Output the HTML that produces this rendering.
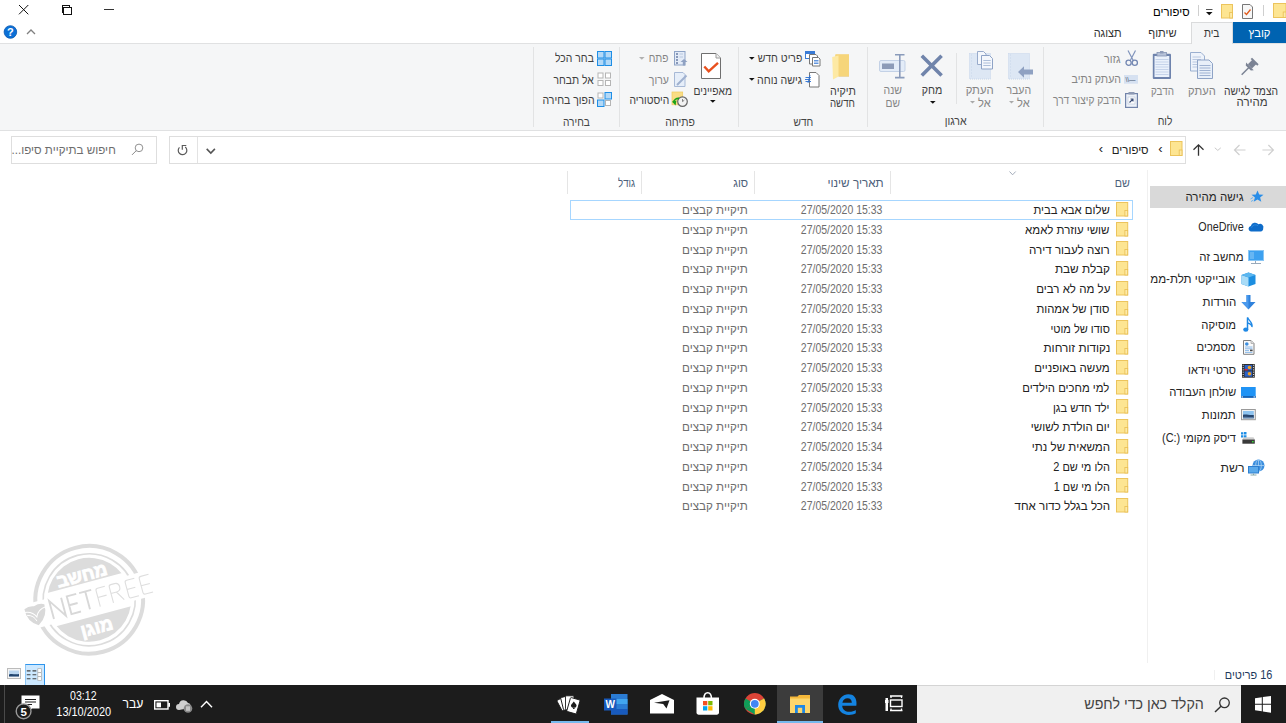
<!DOCTYPE html>
<html><head><meta charset="utf-8">
<style>
*{margin:0;padding:0;box-sizing:border-box}
html,body{width:1286px;height:723px;overflow:hidden;background:#fff}
body{position:relative;font-family:"Liberation Sans",sans-serif;font-size:12px;color:#000}
.a{position:absolute}
.t{position:absolute;white-space:nowrap;font-size:12px;line-height:14px}
.r{direction:rtl;text-align:right}
.l{direction:ltr;text-align:left}
svg{position:absolute;overflow:visible}
</style></head><body>
<svg style="left:0;top:0" width="140" height="22">
 <path d="M19 5 L28.3 14.3 M28.3 5 L19 14.3" stroke="#111" stroke-width="1" fill="none"/>
 <rect x="63.5" y="7.5" width="8" height="6.5" stroke="#111" stroke-width="1" fill="none" shape-rendering="crispEdges"/>
 <path d="M62.5 12.5 V5.5 H69.5 V7" stroke="#111" stroke-width="1" fill="none" shape-rendering="crispEdges"/>
 <path d="M104 9.5 H114" stroke="#333" stroke-width="1" fill="none" shape-rendering="crispEdges"/>
</svg>
<div class="t" style="right:95.97px;top:4.60px;color:#000;font-size:12px;direction:rtl;font-weight:normal;transform-origin:100% 50%;transform:scaleX(0.9462)">סיפורים</div>
<div class="a" style="left:1197.5px;top:5px;width:1px;height:11px;background:#cfcfcf;"></div>
<div class="a" style="left:1263px;top:5px;width:1px;height:11px;background:#cfcfcf;"></div>
<svg style="left:1205px;top:8px" width="9" height="8"><path d="M1 1.5 H7.5" stroke="#555" stroke-width="1"/><path d="M1 4 L7.5 4 L4.25 7.2 Z" fill="#111"/></svg>
<svg style="left:1221px;top:4px" width="13" height="15.5"><rect x="0.5" y="0.5" width="11" height="13.5" fill="#fde592" stroke="#ecc45c" stroke-width="1"/><rect x="8.7" y="8.5" width="2.8" height="5.5" fill="#fdeaa8" stroke="#e9bf52" stroke-width="0.8"/></svg>
<svg style="left:1273px;top:3px" width="14.5" height="16"><rect x="0.5" y="0.5" width="12.5" height="14" fill="#fde592" stroke="#ecc45c" stroke-width="1"/><rect x="10.2" y="9" width="2.8" height="5.5" fill="#fdeaa8" stroke="#e9bf52" stroke-width="0.8"/></svg>
<svg style="left:1242px;top:4px" width="12" height="15"><path d="M0.5 0.5 H8 L10.5 3 V14.5 H0.5 Z" fill="#f7f7f7" stroke="#777" stroke-width="1"/><path d="M2.5 8.5 L4.5 10.5 L8.5 5.5" stroke="#e05a1a" stroke-width="1.3" fill="none"/></svg>
<div class="a" style="left:0px;top:43px;width:1286px;height:1px;background:#e0e1e2;"></div>
<div class="a" style="left:1233px;top:22px;width:53px;height:21px;background:#0063b1;"></div>
<div class="t" style="right:15.11px;top:26.30px;color:#fff;font-size:12px;direction:rtl;font-weight:normal;transform-origin:100% 50%;transform:scaleX(0.9348)">קובץ</div>
<div class="a" style="left:1191px;top:22px;width:42px;height:22px;background:#f5f6f7;border:1px solid #dadbdc;border-bottom:none"></div>
<div class="t" style="right:66.54px;top:26.00px;color:#333;font-size:12px;direction:rtl;font-weight:normal;transform-origin:100% 50%;transform:scaleX(0.8421)">בית</div>
<div class="t" style="right:109.73px;top:26.00px;color:#333;font-size:12px;direction:rtl;font-weight:normal;transform-origin:100% 50%;transform:scaleX(0.9258)">שיתוף</div>
<div class="t" style="right:164.21px;top:26.00px;color:#333;font-size:12px;direction:rtl;font-weight:normal;transform-origin:100% 50%;transform:scaleX(0.9133)">תצוגה</div>
<svg style="left:0;top:22px" width="40" height="22">
 <circle cx="10.4" cy="10" r="6.3" fill="#0b70d6" stroke="#0a58b0" stroke-width="0.8"/>
 <text x="10.4" y="14.2" text-anchor="middle" font-family="Liberation Sans" font-weight="bold" font-size="11" fill="#fff">?</text>
 <path d="M27 12 L31 8 L35 12" stroke="#808080" stroke-width="1.3" fill="none"/>
</svg>
<div class="a" style="left:0px;top:44px;width:1286px;height:86px;background:#f5f6f7;"></div>
<div class="a" style="left:0px;top:130px;width:1286px;height:1px;background:#e0e1e2;"></div>
<div class="a" style="left:532.5px;top:46.5px;width:1px;height:80px;background:#e2e3e4;"></div>
<div class="a" style="left:618.6px;top:46.5px;width:1px;height:80px;background:#e2e3e4;"></div>
<div class="a" style="left:738.3px;top:46.5px;width:1px;height:80px;background:#e2e3e4;"></div>
<div class="a" style="left:866.7px;top:46.5px;width:1px;height:80px;background:#e2e3e4;"></div>
<div class="a" style="left:1042.5px;top:46.5px;width:1px;height:80px;background:#e2e3e4;"></div>
<div class="a" style="left:955.7px;top:53px;width:1px;height:51px;background:#e2e3e4;"></div>
<div class="t" style="right:7.96px;top:83.70px;color:#404040;font-size:12px;direction:rtl;font-weight:normal;transform-origin:100% 50%;transform:scaleX(0.8571)">הצמד לגישה</div>
<div class="t" style="right:17.90px;top:95.00px;color:#404040;font-size:12px;direction:rtl;font-weight:normal;transform-origin:100% 50%;transform:scaleX(0.9531)">מהירה</div>
<div class="t" style="right:70.33px;top:83.70px;color:#858585;font-size:12px;direction:rtl;font-weight:normal;transform-origin:100% 50%;transform:scaleX(0.9310)">העתק</div>
<div class="t" style="right:112.56px;top:83.70px;color:#858585;font-size:12px;direction:rtl;font-weight:normal;transform-origin:100% 50%;transform:scaleX(0.8214)">הדבק</div>
<div class="t" style="right:165.46px;top:51.50px;color:#858585;font-size:12px;direction:rtl;font-weight:normal;transform-origin:100% 50%;transform:scaleX(0.8947)">גזור</div>
<div class="t" style="right:164.93px;top:72.20px;color:#858585;font-size:12px;direction:rtl;font-weight:normal;transform-origin:100% 50%;transform:scaleX(0.8839)">העתק נתיב</div>
<div class="t" style="right:165.03px;top:92.70px;color:#858585;font-size:12px;direction:rtl;font-weight:normal;transform-origin:100% 50%;transform:scaleX(0.8500)">הדבק קיצור דרך</div>
<div class="t" style="right:113.68px;top:114.00px;color:#444;font-size:12px;direction:rtl;font-weight:normal;transform-origin:100% 50%;transform:scaleX(0.8471)">לוח</div>
<svg style="left:1240px;top:55px" width="22" height="22">
 <g transform="translate(9.3 12) rotate(45) scale(0.9)">
  <rect x="-3.2" y="-8" width="6.4" height="7" fill="#7b8394"/>
  <rect x="-5.2" y="-9.5" width="10.4" height="2.2" fill="#7b8394"/>
  <path d="M-6 -1 H6 L4 1.6 H-4 Z" fill="#7b8394"/>
  <path d="M0 1 V12" stroke="#7b8394" stroke-width="1.6"/>
 </g>
</svg>
<svg style="left:1190px;top:52px" width="24" height="28">
 <path d="M0.5 0.5 H11 L14.5 4 V19 H0.5 Z" fill="#eef3fb" stroke="#9bb0d0"/>
 <path d="M2.5 5 H11 M2.5 7.5 H11 M2.5 10 H11 M2.5 12.5 H11 M2.5 15 H7" stroke="#b9c8e0" stroke-width="1"/>
 <path d="M7.5 8 H19 L22.5 11.5 V26.5 H7.5 Z" fill="#e8eff9" stroke="#8ea3c6"/>
 <path d="M9.5 13.5 H20.5 M9.5 16 H20.5 M9.5 18.5 H20.5 M9.5 21 H20.5 M9.5 23.5 H20.5" stroke="#9fb2d2" stroke-width="1"/>
</svg>
<svg style="left:1152px;top:51px" width="20" height="29">
 <rect x="0.8" y="2.8" width="18.2" height="25.2" rx="1" fill="#6e83ad"/>
 <rect x="2.5" y="5" width="14.8" height="21" fill="#eaf1fb"/>
 <path d="M3.5 8.5 H16.5 M3.5 11 H16.5 M3.5 13.5 H16.5 M3.5 16 H16.5 M3.5 18.5 H16.5 M3.5 21 H16.5 M3.5 23.5 H16.5" stroke="#c5d3ea" stroke-width="1"/>
 <rect x="5" y="1.5" width="9.5" height="3.5" fill="#b6c2d8" stroke="#8594b4" stroke-width="0.8"/>
 <rect x="8" y="0" width="3.5" height="2.5" fill="#8c9ab8"/>
</svg>
<svg style="left:1125px;top:50px" width="14" height="17">
 <path d="M3 0.5 L8.5 11 M10.5 0.5 L5 11" stroke="#8094bc" stroke-width="1.2" fill="none"/>
 <circle cx="3.6" cy="12.7" r="2.6" fill="none" stroke="#7387b2" stroke-width="1.3"/>
 <circle cx="9.8" cy="12.7" r="2.6" fill="none" stroke="#7387b2" stroke-width="1.3"/>
</svg>
<svg style="left:1124px;top:75px" width="15" height="9">
 <rect x="0" y="0" width="14" height="8.7" fill="#d6e1f1"/>
 <text x="1.5" y="7" font-family="Liberation Sans" font-size="6.5" fill="#44556e">\\—</text>
</svg>
<svg style="left:1124.5px;top:92px" width="13" height="16">
 <rect x="0.6" y="1.6" width="11.8" height="13.8" fill="#edf2f9" stroke="#7284aa" stroke-width="1.2"/>
 <rect x="3.5" y="0" width="6" height="2.5" fill="#8e9ab4"/>
 <rect x="3" y="5" width="7" height="7" fill="#fff" stroke="#b9c4d8" stroke-width="0.6"/>
 <path d="M4.5 10.5 L8 7 M5.5 7 H8 V9.5" stroke="#3c4f78" stroke-width="1.1" fill="none"/>
</svg>
<div class="t" style="right:255.24px;top:83.00px;color:#858585;font-size:12px;direction:rtl;font-weight:normal;transform-origin:100% 50%;transform:scaleX(0.8786)">העבר</div>
<div class="t" style="right:256.32px;top:95.80px;color:#858585;font-size:12px;direction:rtl;font-weight:normal;transform-origin:100% 50%;transform:scaleX(0.9286)">אל</div>
<svg style="left:1009.0px;top:101.25px" width="5.0" height="2.5"><path d="M0 0 H5.0 L2.5 2.5 Z" fill="#a9a9a9"/></svg>
<div class="t" style="right:292.32px;top:83.00px;color:#858585;font-size:12px;direction:rtl;font-weight:normal;transform-origin:100% 50%;transform:scaleX(0.9448)">העתק</div>
<div class="t" style="right:295.82px;top:95.80px;color:#858585;font-size:12px;direction:rtl;font-weight:normal;transform-origin:100% 50%;transform:scaleX(0.9286)">אל</div>
<svg style="left:969.5px;top:101.25px" width="5.0" height="2.5"><path d="M0 0 H5.0 L2.5 2.5 Z" fill="#a9a9a9"/></svg>
<div class="t" style="right:343.39px;top:83.00px;color:#404040;font-size:12px;direction:rtl;font-weight:normal;transform-origin:100% 50%;transform:scaleX(0.8870)">מחק</div>
<svg style="left:929.6px;top:100.89999999999999px" width="5.6" height="2.8"><path d="M0 0 H5.6 L2.8 2.8 Z" fill="#111"/></svg>
<div class="t" style="right:383.96px;top:83.00px;color:#858585;font-size:12px;direction:rtl;font-weight:normal;transform-origin:100% 50%;transform:scaleX(0.8762)">שנה</div>
<div class="t" style="right:386.08px;top:95.80px;color:#858585;font-size:12px;direction:rtl;font-weight:normal;transform-origin:100% 50%;transform:scaleX(0.8588)">שם</div>
<div class="t" style="right:319.70px;top:114.00px;color:#444;font-size:12px;direction:rtl;font-weight:normal;transform-origin:100% 50%;transform:scaleX(0.8840)">ארגון</div>
<svg style="left:1008px;top:52.5px" width="26" height="27">
 <rect x="0.5" y="0.5" width="21" height="25.5" fill="#dde7f4" stroke="#c6d5ea" stroke-dasharray="1 1"/>
 <path d="M2.5 1.5 V25" stroke="#c9d6ea" stroke-dasharray="1 2"/>
 <path d="M10 19 L16 13.2 V16.6 H25 V21.4 H16 V24.8 Z" fill="#8fa1c2"/>
</svg>
<svg style="left:968.5px;top:50.5px" width="26" height="29">
 <rect x="0.5" y="2.5" width="21" height="25.5" fill="#dde7f4" stroke="#c6d5ea" stroke-dasharray="1 1"/>
 <path d="M2.5 3.5 V27" stroke="#c9d6ea" stroke-dasharray="1 2"/>
 <path d="M8.5 0.5 H14.5 L17 3 V13.5 H8.5 Z" fill="#f4f7fc" stroke="#98abcb"/>
 <path d="M12.5 4.5 H20.5 L23.5 7.5 V18 H12.5 Z" fill="#f4f7fc" stroke="#8ea3c6"/>
 <path d="M14.3 9.5 H21.7 M14.3 12 H21.7 M14.3 14.5 H21.7" stroke="#9cb0d0" stroke-width="0.8"/>
</svg>
<svg style="left:919px;top:53px" width="26" height="26">
 <path d="M2.8 2.8 L22.6 22.6 M22.6 2.8 L2.8 22.6" stroke="#7084ab" stroke-width="3.6" stroke-linecap="butt"/>
</svg>
<svg style="left:879px;top:53.5px" width="28" height="25">
 <rect x="0.5" y="6.5" width="25.5" height="11" rx="1.5" fill="#e3ecf8" stroke="#c3d1e6"/>
 <rect x="3" y="9.5" width="12" height="5.5" fill="#8c9bb8"/>
 <path d="M16 0.8 H25.5 M16 23.6 H25.5 M20.8 0.8 V23.6" stroke="#8a9bbb" stroke-width="1.6"/>
</svg>
<div class="t" style="right:430.43px;top:83.60px;color:#404040;font-size:12px;direction:rtl;font-weight:normal;transform-origin:100% 50%;transform:scaleX(0.8931)">תיקיה</div>
<div class="t" style="right:431.06px;top:95.50px;color:#404040;font-size:12px;direction:rtl;font-weight:normal;transform-origin:100% 50%;transform:scaleX(0.8065)">חדשה</div>
<div class="t" style="right:483.71px;top:51.40px;color:#404040;font-size:12px;direction:rtl;font-weight:normal;transform-origin:100% 50%;transform:scaleX(0.8706)">פריט חדש</div>
<svg style="left:748.9000000000001px;top:56.6px" width="5.6" height="2.8"><path d="M0 0 H5.6 L2.8 2.8 Z" fill="#111"/></svg>
<div class="t" style="right:483.83px;top:72.50px;color:#404040;font-size:12px;direction:rtl;font-weight:normal;transform-origin:100% 50%;transform:scaleX(0.8824)">גישה נוחה</div>
<svg style="left:748.9000000000001px;top:77.6px" width="5.6" height="2.8"><path d="M0 0 H5.6 L2.8 2.8 Z" fill="#111"/></svg>
<div class="t" style="right:472.24px;top:114.60px;color:#444;font-size:12px;direction:rtl;font-weight:normal;transform-origin:100% 50%;transform:scaleX(0.8478)">חדש</div>
<svg style="left:832px;top:54px" width="18" height="26">
 <path d="M3.5 0.5 H17 V22 H3.5 Z" fill="#f0c95a"/>
 <path d="M3.5 0.5 H17 V22 H3.5 Z" fill="#f6d57a"/>
 <path d="M0.2 3 L6.5 1.5 V22.5 L1 25.5 Z" fill="#fde9a4"/>
 <path d="M6.5 22 H17 V22.5 H6.5Z" fill="#e5b94c"/>
</svg>
<svg style="left:805px;top:51px" width="16" height="16">
 <rect x="0.5" y="0.5" width="9" height="7" fill="#fff" stroke="#3a7bd5"/>
 <rect x="1" y="1" width="8" height="2" fill="#3a7bd5"/>
 <path d="M4.5 3.5 H11 L12.5 5 V13 H4.5 Z" fill="#fff" stroke="#777"/>
 <path d="M7.5 6.5 H13.5 L15 8 V15 H7.5 Z" fill="#fff" stroke="#777"/>
 <path d="M9 9.5 H13.5 M9 11 H13.5 M9 12.5 H13.5" stroke="#3a7bd5" stroke-width="0.8"/>
</svg>
<svg style="left:805px;top:71.5px" width="15" height="16">
 <path d="M4.5 0.5 H11 L14 3.5 V15 H4.5 Z" fill="#fff" stroke="#777"/>
 <path d="M0.5 5.5 H6 M0 7.5 H5.5 M0.5 9.5 H6" stroke="#2a6fd0" stroke-width="0.9"/>
 <path d="M5 3 L3 11" stroke="#2a6fd0" stroke-width="0.9"/>
</svg>
<div class="t" style="right:553.97px;top:83.60px;color:#404040;font-size:12px;direction:rtl;font-weight:normal;transform-origin:100% 50%;transform:scaleX(0.8556)">מאפיינים</div>
<svg style="left:709.5px;top:100.39999999999999px" width="5.6" height="2.8"><path d="M0 0 H5.6 L2.8 2.8 Z" fill="#111"/></svg>
<div class="t" style="right:617.41px;top:51.40px;color:#858585;font-size:12px;direction:rtl;font-weight:normal;transform-origin:100% 50%;transform:scaleX(0.8417)">פתח</div>
<svg style="left:638.8000000000001px;top:56.6px" width="5.6" height="2.8"><path d="M0 0 H5.6 L2.8 2.8 Z" fill="#b0b0b0"/></svg>
<div class="t" style="right:617.07px;top:72.50px;color:#858585;font-size:12px;direction:rtl;font-weight:normal;transform-origin:100% 50%;transform:scaleX(0.8783)">ערוך</div>
<div class="t" style="right:616.83px;top:92.80px;color:#404040;font-size:12px;direction:rtl;font-weight:normal;transform-origin:100% 50%;transform:scaleX(0.8587)">היסטוריה</div>
<div class="t" style="right:591.20px;top:114.60px;color:#444;font-size:12px;direction:rtl;font-weight:normal;transform-origin:100% 50%;transform:scaleX(0.8765)">פתיחה</div>
<svg style="left:701px;top:53px" width="21" height="27">
 <path d="M0.5 0.5 H15 L19.5 5 V25.5 H0.5 Z" fill="#fff" stroke="#6f6f6f"/>
 <path d="M15 0.5 V5 H19.5" fill="#f0f0f0" stroke="#9a9a9a"/>
 <path d="M3.3 13.5 L7.7 18.3 L17 9.8" stroke="#e8501e" stroke-width="2.4" fill="none"/>
</svg>
<svg style="left:674px;top:51px" width="14" height="15">
 <rect x="0.5" y="0.5" width="10.5" height="13.5" fill="#e3ebf7" stroke="#8ea3c6"/>
 <path d="M2 3 H4 M2 6 H4 M2 9 H4 M2 12 H4" stroke="#6b7fa6" stroke-width="1.5"/>
 <path d="M5.5 3 H9 M5.5 6 H9" stroke="#b8c7de" stroke-width="1"/>
 <path d="M10 8 L13.5 11 H11.2 V14.5 H8.8 V11 H6.5 Z" fill="#8fa1c2"/>
</svg>
<svg style="left:674px;top:71.5px" width="14" height="16">
 <path d="M0.5 0.5 H9 L11 2.5 V14.5 H0.5 Z" fill="#e6eef9" stroke="#a7b9d6"/>
 <path d="M3 13 L12.5 3.5" stroke="#9fb0cf" stroke-width="2"/>
</svg>
<svg style="left:672px;top:92px" width="17" height="16">
 <rect x="0" y="0" width="10.7" height="12.8" fill="#f9dd85" stroke="#efca5c" stroke-width="0.7"/>
 <circle cx="10.5" cy="9.6" r="4.8" fill="#f2f2f2" stroke="#666" stroke-width="1.2"/>
 <path d="M10.5 7 V9.6 L12.3 8.2" stroke="#777" stroke-width="0.9" fill="none"/>
 <path d="M1.5 10.5 A5 5 0 0 1 7 6.5" stroke="#1aa31a" stroke-width="1.8" fill="none"/>
 <path d="M0 9.5 L3.5 13.5 L4.5 8.5 Z" fill="#1aa31a"/>
</svg>
<div class="t" style="right:692.04px;top:51.40px;color:#404040;font-size:12px;direction:rtl;font-weight:normal;transform-origin:100% 50%;transform:scaleX(0.8644)">בחר הכל</div>
<div class="t" style="right:692.20px;top:72.50px;color:#404040;font-size:12px;direction:rtl;font-weight:normal;transform-origin:100% 50%;transform:scaleX(0.8617)">אל תבחר</div>
<div class="t" style="right:691.44px;top:92.80px;color:#404040;font-size:12px;direction:rtl;font-weight:normal;transform-origin:100% 50%;transform:scaleX(0.8746)">הפוך בחירה</div>
<div class="t" style="right:695.72px;top:114.60px;color:#444;font-size:12px;direction:rtl;font-weight:normal;transform-origin:100% 50%;transform:scaleX(0.8438)">בחירה</div>
<svg style="left:597px;top:51px" width="16" height="16"><rect x="0.5" y="0.5" width="6.5" height="6.5" fill="#b3d9f7" stroke="#1e8ee6" stroke-width="1"/><rect x="8.0" y="0.5" width="6.5" height="6.5" fill="#b3d9f7" stroke="#1e8ee6" stroke-width="1"/><rect x="0.5" y="8.0" width="6.5" height="6.5" fill="#b3d9f7" stroke="#1e8ee6" stroke-width="1"/><rect x="8.0" y="8.0" width="6.5" height="6.5" fill="#b3d9f7" stroke="#1e8ee6" stroke-width="1"/></svg>
<svg style="left:597px;top:72px" width="16" height="16"><rect x="1.0" y="1.0" width="5" height="5" fill="#fff" stroke="#b5b5b5" stroke-width="1"/><rect x="8.5" y="1.0" width="5" height="5" fill="#fff" stroke="#b5b5b5" stroke-width="1"/><rect x="1.0" y="8.5" width="5" height="5" fill="#fff" stroke="#b5b5b5" stroke-width="1"/><rect x="8.5" y="8.5" width="5" height="5" fill="#fff" stroke="#b5b5b5" stroke-width="1"/></svg>
<svg style="left:597px;top:92px" width="16" height="16"><rect x="1.0" y="1.0" width="5" height="5" fill="#fff" stroke="#b5b5b5" stroke-width="1"/><rect x="8.0" y="0.5" width="6.5" height="6.5" fill="#b3d9f7" stroke="#1e8ee6" stroke-width="1"/><rect x="0.5" y="8.0" width="6.5" height="6.5" fill="#b3d9f7" stroke="#1e8ee6" stroke-width="1"/><rect x="8.5" y="8.5" width="5" height="5" fill="#fff" stroke="#b5b5b5" stroke-width="1"/></svg>
<div class="a" style="left:11px;top:136px;width:146px;height:28px;background:#fff;border:1px solid #dedede"></div>
<div class="t" style="right:1169.94px;top:142.80px;color:#6d6d6d;font-size:12px;direction:rtl;font-weight:normal;transform-origin:100% 50%;transform:scaleX(0.9679)">חיפוש בתיקיית סיפו...</div>
<svg style="left:131px;top:143px" width="13" height="13">
 <circle cx="8" cy="4.9" r="3.8" fill="none" stroke="#8a8a8a" stroke-width="0.95"/>
 <path d="M5.3 7.6 L1 11.9" stroke="#8a8a8a" stroke-width="1"/>
</svg>
<div class="a" style="left:169px;top:136px;width:1017px;height:28px;background:#fff;border:1px solid #dedede"></div>
<div class="a" style="left:197px;top:137px;width:1px;height:26px;background:#e3e3e3;"></div>
<svg style="left:176px;top:144px" width="13" height="13">
 <path d="M3.46 3.36 A4.3 4.3 0 1 0 9.2 3.0" stroke="#5a5a5a" stroke-width="1.2" fill="none"/>
 <path d="M6.3 5.8 V1.5 H10.3" stroke="#5a5a5a" stroke-width="1.2" fill="none"/>
</svg>
<svg style="left:205px;top:147px" width="12" height="8">
 <path d="M1.7 1.9 L5.8 6 L9.9 1.9" stroke="#555" stroke-width="1.6" fill="none"/>
</svg>
<svg style="left:1170px;top:141.3px" width="13.5" height="16"><rect x="0.5" y="0.5" width="11.5" height="14" fill="#fde592" stroke="#ecc45c" stroke-width="1"/><rect x="9.2" y="9" width="2.8" height="5.5" fill="#fdeaa8" stroke="#e9bf52" stroke-width="0.8"/></svg>
<div class="t r" style="right:123.5px;top:142.3px;color:#222;font-size:13px;">›</div>
<div class="t" style="right:137.87px;top:142.80px;color:#222;font-size:12px;direction:rtl;font-weight:normal;transform-origin:100% 50%;transform:scaleX(0.9538)">סיפורים</div>
<div class="t r" style="right:183px;top:142.3px;color:#222;font-size:13px;">›</div>
<svg style="left:1190px;top:142px" width="90" height="16">
 <path d="M8.5 2.8 V13.8 M3.5 7.8 L8.5 2.8 L13.5 7.8" stroke="#333" stroke-width="1.3" fill="none"/>
 <path d="M24.8 5.8 L27.8 8.4 L30.8 5.8" stroke="#c9c9c9" stroke-width="1" fill="none"/>
 <path d="M44.5 8 H55.5 M49.5 3 L44.5 8 L49.5 13" stroke="#cfcfcf" stroke-width="1.2" fill="none"/>
 <path d="M72.4 8 H83.4 M78.4 3 L83.4 8 L78.4 13" stroke="#cfcfcf" stroke-width="1.2" fill="none"/>
</svg>
<div class="a" style="left:1147px;top:170px;width:1px;height:493px;background:#f0f0f0;"></div>
<div class="a" style="left:1150px;top:186px;width:136px;height:22px;background:#d9d9d9;"></div>
<div class="t" style="right:42.47px;top:190.00px;color:#262626;font-size:12px;direction:rtl;font-weight:normal;transform-origin:100% 50%;transform:scaleX(0.9607)">גישה מהירה</div>
<svg style="left:1250px;top:190px" width="14" height="13">
 <path d="M7.5 0.5 L9.2 4.6 L13.5 4.8 L10.1 7.6 L11.3 11.8 L7.5 9.4 L3.7 11.8 L4.9 7.6 L1.5 4.8 L5.8 4.6 Z" fill="#2a8ee8"/>
 <path d="M0.5 9 L3 7.5 M1 11.5 L3.5 10" stroke="#6cb5f0" stroke-width="1"/>
</svg>
<div class="t" style="right:42.68px;top:219.60px;color:#262626;font-size:12px;direction:ltr;font-weight:normal;transform-origin:100% 50%;transform:scaleX(0.8941)">OneDrive</div>
<svg style="left:1248px;top:221px" width="16" height="11">
 <path d="M2.8 10.5 A2.8 2.8 0 0 1 2.8 5 A4.5 4.5 0 0 1 10.5 3.2 A3.4 3.4 0 0 1 15.2 7.5 A3 3 0 0 1 12.6 10.5 Z" fill="#0f6cc9"/>
 <path d="M3.5 6.8 A4 4 0 0 1 10 4.8" stroke="#2a86dc" stroke-width="1" fill="none"/>
</svg>
<div class="t" style="right:41.96px;top:250.30px;color:#262626;font-size:12px;direction:rtl;font-weight:normal;transform-origin:100% 50%;transform:scaleX(0.9543)">מחשב זה</div>
<svg style="left:1247.5px;top:250px" width="16" height="15">
 <rect x="0.5" y="0.5" width="15" height="10" fill="#3da1f0" stroke="#8ac6f4"/>
 <rect x="2" y="2" width="4" height="7" fill="#66b6f3"/>
 <path d="M7.5 11 V13 M3 13.5 H13" stroke="#9ab" stroke-width="1"/>
</svg>
<div class="t" style="right:51.10px;top:272.40px;color:#262626;font-size:12px;direction:rtl;font-weight:normal;transform-origin:100% 50%;transform:scaleX(0.9640)">אובייקטי תלת-ממ</div>
<div class="t" style="right:50.31px;top:295.00px;color:#262626;font-size:12px;direction:rtl;font-weight:normal;transform-origin:100% 50%;transform:scaleX(0.9571)">הורדות</div>
<div class="t" style="right:50.47px;top:317.60px;color:#262626;font-size:12px;direction:rtl;font-weight:normal;transform-origin:100% 50%;transform:scaleX(0.9378)">מוסיקה</div>
<div class="t" style="right:49.97px;top:340.00px;color:#262626;font-size:12px;direction:rtl;font-weight:normal;transform-origin:100% 50%;transform:scaleX(0.9390)">מסמכים</div>
<div class="t" style="right:50.40px;top:362.70px;color:#262626;font-size:12px;direction:rtl;font-weight:normal;transform-origin:100% 50%;transform:scaleX(0.9212)">סרטי וידאו</div>
<div class="t" style="right:50.37px;top:385.40px;color:#262626;font-size:12px;direction:rtl;font-weight:normal;transform-origin:100% 50%;transform:scaleX(0.9394)">שולחן העבודה</div>
<div class="t" style="right:50.75px;top:407.70px;color:#262626;font-size:12px;direction:rtl;font-weight:normal;transform-origin:100% 50%;transform:scaleX(0.9500)">תמונות</div>
<div class="t" style="right:50.66px;top:430.60px;color:#262626;font-size:12px;direction:rtl;font-weight:normal;transform-origin:100% 50%;transform:scaleX(0.9136)">דיסק מקומי <span dir="ltr">(C:)</span></div>
<svg style="left:1241px;top:272px" width="16" height="15">
 <path d="M7.5 0.5 L14.5 3 V12 L7.5 14.5 L0.5 12 V3 Z" fill="#1c8ee0"/>
 <path d="M0.5 3 L7.5 5.5 V14.5 L0.5 12 Z" fill="#a9dcf7"/>
 <path d="M0.5 3 L7.5 0.5 L14.5 3 L7.5 5.5 Z" fill="#5bb6ef"/>
</svg>
<svg style="left:1241px;top:294.5px" width="16" height="15">
 <path d="M5.5 0 H9.5 V7 H14.5 L7.5 14.5 L0.5 7 H5.5 Z" fill="#2f82dc"/>
 <path d="M5.5 0 H7.5 V14 L0.5 7 H5.5 Z" fill="#4a9aee"/>
</svg>
<svg style="left:1243px;top:316.5px" width="11" height="16">
 <path d="M4.5 0.5 V12" stroke="#1e88e5" stroke-width="1.5"/>
 <ellipse cx="2.8" cy="12.6" rx="2.6" ry="2.2" fill="#1e88e5"/>
 <path d="M4.5 0.5 C6 4 10 5 9 10 C8.8 7.5 6.5 6.5 4.5 6" stroke="#1e88e5" stroke-width="1.3" fill="none"/>
</svg>
<svg style="left:1242.5px;top:340px" width="12" height="15">
 <path d="M0.5 0.5 H8 L11 3.5 V14.3 H0.5 Z" fill="#fafafa" stroke="#808080"/>
 <path d="M8 0.5 V3.5 H11" fill="#ddd" stroke="#aaa" stroke-width="0.8"/>
 <circle cx="3.8" cy="4" r="1.8" fill="#3c8fe0"/>
 <path d="M2 7 H9.5 M2 8.8 H9.5 M2 10.6 H6 M2 12.4 H9.5" stroke="#7fb2e6" stroke-width="0.9"/>
 <rect x="7" y="9.6" width="2.6" height="1.6" fill="#444"/>
</svg>
<svg style="left:1242px;top:363.5px" width="13" height="14">
 <rect x="0" y="0" width="12.8" height="13.7" fill="#2d2d2d"/>
 <path d="M1.2 0.8 V13 M11.6 0.8 V13" stroke="#e8e8e8" stroke-width="1" stroke-dasharray="1 1.3"/>
 <rect x="2.6" y="1" width="7.6" height="5.4" fill="#2a62c8"/>
 <rect x="2.6" y="7.3" width="7.6" height="5.4" fill="#2a62c8"/>
 <circle cx="7.5" cy="3.5" r="1.8" fill="#f0a020"/>
 <circle cx="7.5" cy="9.8" r="1.8" fill="#f0a020"/>
 <rect x="2.6" y="5" width="3" height="1.4" fill="#d23"/>
</svg>
<svg style="left:1241px;top:387px" width="15" height="11">
 <rect x="0" y="0" width="14.7" height="10.7" fill="#1f93f5"/>
 <rect x="0" y="9.2" width="14.7" height="1.5" fill="#1459a8"/>
 <path d="M0.5 9.95 H2 M12.5 9.95 H14" stroke="#fff" stroke-width="0.9"/>
</svg>
<svg style="left:1241px;top:409.4px" width="15" height="12">
 <rect x="0.5" y="0.5" width="13.8" height="10.2" fill="#f2f2f2" stroke="#9a9a9a"/>
 <rect x="2" y="2" width="10.8" height="7.2" fill="#8ec3ef"/>
 <path d="M2 5.8 C5 4.8 8 6.5 12.8 6 V9.2 H2 Z" fill="#27466e"/>
 <path d="M2 8 C6 7.2 9 8.5 12.8 8 V9.2 H2 Z" fill="#5d7fa8"/>
</svg>
<svg style="left:1240.8px;top:432px" width="15" height="12">
 <path d="M0 0.3 H2.4 V2.6 H0Z M3 0 H5.5 V2.6 H3Z M0 3.2 H2.4 V5.6 H0Z M3 3.2 H5.5 V6 H3Z" fill="#1e8ee6"/>
 <path d="M2.5 5.3 H12.5 L13.8 7.5 H1.4 Z" fill="#cfcfcf"/>
 <rect x="1.4" y="7.5" width="12.4" height="4.2" fill="#3a3a3a"/>
 <rect x="11" y="9" width="1.6" height="1.4" fill="#38d838"/>
</svg>
<div class="t" style="right:42.02px;top:461.00px;color:#262626;font-size:12px;direction:rtl;font-weight:normal;transform-origin:100% 50%;transform:scaleX(1.0217)">רשת</div>
<svg style="left:1248px;top:459px" width="17" height="17">
 <circle cx="10.5" cy="6.5" r="6" fill="#3b8ede"/>
 <path d="M5 6.5 H16 M10.5 0.5 V12.5" stroke="#a8d2f5" stroke-width="0.8"/>
 <ellipse cx="10.5" cy="6.5" rx="2.8" ry="6" fill="none" stroke="#a8d2f5" stroke-width="0.8"/>
 <rect x="0.5" y="7.5" width="10" height="6.5" fill="#5aa9ea" stroke="#2d7fd0"/>
 <path d="M5.5 14.5 V16 M2.5 16 H8.5" stroke="#8aa" stroke-width="1"/>
</svg>
<div class="a" style="left:566.5px;top:170.5px;width:1px;height:23px;background:#e5e5e5;"></div>
<div class="a" style="left:641.3px;top:170.5px;width:1px;height:23px;background:#e5e5e5;"></div>
<div class="a" style="left:754.4px;top:170.5px;width:1px;height:23px;background:#e5e5e5;"></div>
<div class="a" style="left:890.4px;top:170.5px;width:1px;height:23px;background:#e5e5e5;"></div>
<div class="t" style="right:156.58px;top:175.70px;color:#4c607a;font-size:12px;direction:rtl;font-weight:normal;transform-origin:100% 50%;transform:scaleX(0.8941)">שם</div>
<div class="t" style="right:401.98px;top:175.50px;color:#4c607a;font-size:12px;direction:rtl;font-weight:normal;transform-origin:100% 50%;transform:scaleX(0.9754)">תאריך שינוי</div>
<div class="t" style="right:537.74px;top:175.50px;color:#4c607a;font-size:12px;direction:rtl;font-weight:normal;transform-origin:100% 50%;transform:scaleX(0.9250)">סוג</div>
<div class="t" style="right:650.94px;top:175.50px;color:#4c607a;font-size:12px;direction:rtl;font-weight:normal;transform-origin:100% 50%;transform:scaleX(0.8091)">גודל</div>
<svg style="left:1009px;top:171px" width="8" height="5"><path d="M0.5 0.5 L3.6 3.8 L6.7 0.5" stroke="#9aa4b2" stroke-width="0.9" fill="none"/></svg>
<div class="a" style="left:569.5px;top:199.7px;width:563px;height:20px;background:transparent;border:1px solid #a6d6ff"></div>
<svg style="left:1115.6px;top:201.8px" width="13.2" height="15.5"><rect x="0.5" y="0.5" width="11.2" height="13.5" fill="#fde592" stroke="#ecc45c" stroke-width="1"/><rect x="8.899999999999999" y="8.5" width="2.8" height="5.5" fill="#fdeaa8" stroke="#e9bf52" stroke-width="0.8"/></svg>
<div class="t" style="right:176.68px;top:203.00px;color:#222;font-size:12px;direction:rtl;font-weight:normal;transform-origin:100% 50%;transform:scaleX(0.9457)">שלום אבא בבית</div>
<div class="t" style="right:403.10px;top:203.00px;color:#6d6d6d;font-size:12px;direction:ltr;font-weight:normal;transform-origin:100% 50%;transform:scaleX(0.8734)">27/05/2020 15:33</div>
<div class="t" style="right:538.08px;top:203.00px;color:#6d6d6d;font-size:12px;direction:rtl;font-weight:normal;transform-origin:100% 50%;transform:scaleX(0.9706)">תיקיית קבצים</div>
<svg style="left:1115.6px;top:221.55px" width="13.2" height="15.5"><rect x="0.5" y="0.5" width="11.2" height="13.5" fill="#fde592" stroke="#ecc45c" stroke-width="1"/><rect x="8.899999999999999" y="8.5" width="2.8" height="5.5" fill="#fdeaa8" stroke="#e9bf52" stroke-width="0.8"/></svg>
<div class="t" style="right:177.05px;top:222.75px;color:#222;font-size:12px;direction:rtl;font-weight:normal;transform-origin:100% 50%;transform:scaleX(0.9539)">שושי עוזרת לאמא</div>
<div class="t" style="right:403.10px;top:222.75px;color:#6d6d6d;font-size:12px;direction:ltr;font-weight:normal;transform-origin:100% 50%;transform:scaleX(0.8734)">27/05/2020 15:33</div>
<div class="t" style="right:538.08px;top:222.75px;color:#6d6d6d;font-size:12px;direction:rtl;font-weight:normal;transform-origin:100% 50%;transform:scaleX(0.9706)">תיקיית קבצים</div>
<svg style="left:1115.6px;top:241.3px" width="13.2" height="15.5"><rect x="0.5" y="0.5" width="11.2" height="13.5" fill="#fde592" stroke="#ecc45c" stroke-width="1"/><rect x="8.899999999999999" y="8.5" width="2.8" height="5.5" fill="#fdeaa8" stroke="#e9bf52" stroke-width="0.8"/></svg>
<div class="t" style="right:175.82px;top:242.50px;color:#222;font-size:12px;direction:rtl;font-weight:normal;transform-origin:100% 50%;transform:scaleX(0.9627)">רוצה לעבור דירה</div>
<div class="t" style="right:403.10px;top:242.50px;color:#6d6d6d;font-size:12px;direction:ltr;font-weight:normal;transform-origin:100% 50%;transform:scaleX(0.8734)">27/05/2020 15:33</div>
<div class="t" style="right:538.08px;top:242.50px;color:#6d6d6d;font-size:12px;direction:rtl;font-weight:normal;transform-origin:100% 50%;transform:scaleX(0.9706)">תיקיית קבצים</div>
<svg style="left:1115.6px;top:261.05px" width="13.2" height="15.5"><rect x="0.5" y="0.5" width="11.2" height="13.5" fill="#fde592" stroke="#ecc45c" stroke-width="1"/><rect x="8.899999999999999" y="8.5" width="2.8" height="5.5" fill="#fdeaa8" stroke="#e9bf52" stroke-width="0.8"/></svg>
<div class="t" style="right:176.50px;top:262.25px;color:#222;font-size:12px;direction:rtl;font-weight:normal;transform-origin:100% 50%;transform:scaleX(0.9839)">קבלת שבת</div>
<div class="t" style="right:403.10px;top:262.25px;color:#6d6d6d;font-size:12px;direction:ltr;font-weight:normal;transform-origin:100% 50%;transform:scaleX(0.8734)">27/05/2020 15:33</div>
<div class="t" style="right:538.08px;top:262.25px;color:#6d6d6d;font-size:12px;direction:rtl;font-weight:normal;transform-origin:100% 50%;transform:scaleX(0.9706)">תיקיית קבצים</div>
<svg style="left:1115.6px;top:280.8px" width="13.2" height="15.5"><rect x="0.5" y="0.5" width="11.2" height="13.5" fill="#fde592" stroke="#ecc45c" stroke-width="1"/><rect x="8.899999999999999" y="8.5" width="2.8" height="5.5" fill="#fdeaa8" stroke="#e9bf52" stroke-width="0.8"/></svg>
<div class="t" style="right:176.17px;top:282.00px;color:#222;font-size:12px;direction:rtl;font-weight:normal;transform-origin:100% 50%;transform:scaleX(0.9584)">על מה לא רבים</div>
<div class="t" style="right:403.10px;top:282.00px;color:#6d6d6d;font-size:12px;direction:ltr;font-weight:normal;transform-origin:100% 50%;transform:scaleX(0.8734)">27/05/2020 15:33</div>
<div class="t" style="right:538.08px;top:282.00px;color:#6d6d6d;font-size:12px;direction:rtl;font-weight:normal;transform-origin:100% 50%;transform:scaleX(0.9706)">תיקיית קבצים</div>
<svg style="left:1115.6px;top:300.55px" width="13.2" height="15.5"><rect x="0.5" y="0.5" width="11.2" height="13.5" fill="#fde592" stroke="#ecc45c" stroke-width="1"/><rect x="8.899999999999999" y="8.5" width="2.8" height="5.5" fill="#fdeaa8" stroke="#e9bf52" stroke-width="0.8"/></svg>
<div class="t" style="right:176.18px;top:301.75px;color:#222;font-size:12px;direction:rtl;font-weight:normal;transform-origin:100% 50%;transform:scaleX(0.9429)">סודן של אמהות</div>
<div class="t" style="right:403.10px;top:301.75px;color:#6d6d6d;font-size:12px;direction:ltr;font-weight:normal;transform-origin:100% 50%;transform:scaleX(0.8734)">27/05/2020 15:33</div>
<div class="t" style="right:538.08px;top:301.75px;color:#6d6d6d;font-size:12px;direction:rtl;font-weight:normal;transform-origin:100% 50%;transform:scaleX(0.9706)">תיקיית קבצים</div>
<svg style="left:1115.6px;top:320.3px" width="13.2" height="15.5"><rect x="0.5" y="0.5" width="11.2" height="13.5" fill="#fde592" stroke="#ecc45c" stroke-width="1"/><rect x="8.899999999999999" y="8.5" width="2.8" height="5.5" fill="#fdeaa8" stroke="#e9bf52" stroke-width="0.8"/></svg>
<div class="t" style="right:176.63px;top:321.50px;color:#222;font-size:12px;direction:rtl;font-weight:normal;transform-origin:100% 50%;transform:scaleX(0.9154)">סודו של מוטי</div>
<div class="t" style="right:403.10px;top:321.50px;color:#6d6d6d;font-size:12px;direction:ltr;font-weight:normal;transform-origin:100% 50%;transform:scaleX(0.8734)">27/05/2020 15:33</div>
<div class="t" style="right:538.08px;top:321.50px;color:#6d6d6d;font-size:12px;direction:rtl;font-weight:normal;transform-origin:100% 50%;transform:scaleX(0.9706)">תיקיית קבצים</div>
<svg style="left:1115.6px;top:340.05px" width="13.2" height="15.5"><rect x="0.5" y="0.5" width="11.2" height="13.5" fill="#fde592" stroke="#ecc45c" stroke-width="1"/><rect x="8.899999999999999" y="8.5" width="2.8" height="5.5" fill="#fdeaa8" stroke="#e9bf52" stroke-width="0.8"/></svg>
<div class="t" style="right:176.13px;top:341.25px;color:#222;font-size:12px;direction:rtl;font-weight:normal;transform-origin:100% 50%;transform:scaleX(0.9779)">נקודות זורחות</div>
<div class="t" style="right:403.10px;top:341.25px;color:#6d6d6d;font-size:12px;direction:ltr;font-weight:normal;transform-origin:100% 50%;transform:scaleX(0.8734)">27/05/2020 15:33</div>
<div class="t" style="right:538.08px;top:341.25px;color:#6d6d6d;font-size:12px;direction:rtl;font-weight:normal;transform-origin:100% 50%;transform:scaleX(0.9706)">תיקיית קבצים</div>
<svg style="left:1115.6px;top:359.8px" width="13.2" height="15.5"><rect x="0.5" y="0.5" width="11.2" height="13.5" fill="#fde592" stroke="#ecc45c" stroke-width="1"/><rect x="8.899999999999999" y="8.5" width="2.8" height="5.5" fill="#fdeaa8" stroke="#e9bf52" stroke-width="0.8"/></svg>
<div class="t" style="right:175.77px;top:361.00px;color:#222;font-size:12px;direction:rtl;font-weight:normal;transform-origin:100% 50%;transform:scaleX(0.9590)">מעשה באופניים</div>
<div class="t" style="right:403.10px;top:361.00px;color:#6d6d6d;font-size:12px;direction:ltr;font-weight:normal;transform-origin:100% 50%;transform:scaleX(0.8734)">27/05/2020 15:33</div>
<div class="t" style="right:538.08px;top:361.00px;color:#6d6d6d;font-size:12px;direction:rtl;font-weight:normal;transform-origin:100% 50%;transform:scaleX(0.9706)">תיקיית קבצים</div>
<svg style="left:1115.6px;top:379.55px" width="13.2" height="15.5"><rect x="0.5" y="0.5" width="11.2" height="13.5" fill="#fde592" stroke="#ecc45c" stroke-width="1"/><rect x="8.899999999999999" y="8.5" width="2.8" height="5.5" fill="#fdeaa8" stroke="#e9bf52" stroke-width="0.8"/></svg>
<div class="t" style="right:176.16px;top:380.75px;color:#222;font-size:12px;direction:rtl;font-weight:normal;transform-origin:100% 50%;transform:scaleX(0.9435)">למי מחכים הילדים</div>
<div class="t" style="right:403.10px;top:380.75px;color:#6d6d6d;font-size:12px;direction:ltr;font-weight:normal;transform-origin:100% 50%;transform:scaleX(0.8734)">27/05/2020 15:33</div>
<div class="t" style="right:538.08px;top:380.75px;color:#6d6d6d;font-size:12px;direction:rtl;font-weight:normal;transform-origin:100% 50%;transform:scaleX(0.9706)">תיקיית קבצים</div>
<svg style="left:1115.6px;top:399.3px" width="13.2" height="15.5"><rect x="0.5" y="0.5" width="11.2" height="13.5" fill="#fde592" stroke="#ecc45c" stroke-width="1"/><rect x="8.899999999999999" y="8.5" width="2.8" height="5.5" fill="#fdeaa8" stroke="#e9bf52" stroke-width="0.8"/></svg>
<div class="t" style="right:176.05px;top:400.50px;color:#222;font-size:12px;direction:rtl;font-weight:normal;transform-origin:100% 50%;transform:scaleX(0.9197)">ילד חדש בגן</div>
<div class="t" style="right:403.10px;top:400.50px;color:#6d6d6d;font-size:12px;direction:ltr;font-weight:normal;transform-origin:100% 50%;transform:scaleX(0.8734)">27/05/2020 15:33</div>
<div class="t" style="right:538.08px;top:400.50px;color:#6d6d6d;font-size:12px;direction:rtl;font-weight:normal;transform-origin:100% 50%;transform:scaleX(0.9706)">תיקיית קבצים</div>
<svg style="left:1115.6px;top:419.05px" width="13.2" height="15.5"><rect x="0.5" y="0.5" width="11.2" height="13.5" fill="#fde592" stroke="#ecc45c" stroke-width="1"/><rect x="8.899999999999999" y="8.5" width="2.8" height="5.5" fill="#fdeaa8" stroke="#e9bf52" stroke-width="0.8"/></svg>
<div class="t" style="right:175.83px;top:420.25px;color:#222;font-size:12px;direction:rtl;font-weight:normal;transform-origin:100% 50%;transform:scaleX(0.9537)">יום הולדת לשושי</div>
<div class="t" style="right:403.10px;top:420.25px;color:#6d6d6d;font-size:12px;direction:ltr;font-weight:normal;transform-origin:100% 50%;transform:scaleX(0.8734)">27/05/2020 15:34</div>
<div class="t" style="right:538.08px;top:420.25px;color:#6d6d6d;font-size:12px;direction:rtl;font-weight:normal;transform-origin:100% 50%;transform:scaleX(0.9706)">תיקיית קבצים</div>
<svg style="left:1115.6px;top:438.8px" width="13.2" height="15.5"><rect x="0.5" y="0.5" width="11.2" height="13.5" fill="#fde592" stroke="#ecc45c" stroke-width="1"/><rect x="8.899999999999999" y="8.5" width="2.8" height="5.5" fill="#fdeaa8" stroke="#e9bf52" stroke-width="0.8"/></svg>
<div class="t" style="right:176.44px;top:440.00px;color:#222;font-size:12px;direction:rtl;font-weight:normal;transform-origin:100% 50%;transform:scaleX(0.9654)">המשאית של נתי</div>
<div class="t" style="right:403.10px;top:440.00px;color:#6d6d6d;font-size:12px;direction:ltr;font-weight:normal;transform-origin:100% 50%;transform:scaleX(0.8734)">27/05/2020 15:34</div>
<div class="t" style="right:538.08px;top:440.00px;color:#6d6d6d;font-size:12px;direction:rtl;font-weight:normal;transform-origin:100% 50%;transform:scaleX(0.9706)">תיקיית קבצים</div>
<svg style="left:1115.6px;top:458.55px" width="13.2" height="15.5"><rect x="0.5" y="0.5" width="11.2" height="13.5" fill="#fde592" stroke="#ecc45c" stroke-width="1"/><rect x="8.899999999999999" y="8.5" width="2.8" height="5.5" fill="#fdeaa8" stroke="#e9bf52" stroke-width="0.8"/></svg>
<div class="t" style="right:176.47px;top:459.75px;color:#222;font-size:12px;direction:rtl;font-weight:normal;transform-origin:100% 50%;transform:scaleX(0.9161)">הלו מי שם 2</div>
<div class="t" style="right:403.10px;top:459.75px;color:#6d6d6d;font-size:12px;direction:ltr;font-weight:normal;transform-origin:100% 50%;transform:scaleX(0.8734)">27/05/2020 15:34</div>
<div class="t" style="right:538.08px;top:459.75px;color:#6d6d6d;font-size:12px;direction:rtl;font-weight:normal;transform-origin:100% 50%;transform:scaleX(0.9706)">תיקיית קבצים</div>
<svg style="left:1115.6px;top:478.3px" width="13.2" height="15.5"><rect x="0.5" y="0.5" width="11.2" height="13.5" fill="#fde592" stroke="#ecc45c" stroke-width="1"/><rect x="8.899999999999999" y="8.5" width="2.8" height="5.5" fill="#fdeaa8" stroke="#e9bf52" stroke-width="0.8"/></svg>
<div class="t" style="right:176.47px;top:479.50px;color:#222;font-size:12px;direction:rtl;font-weight:normal;transform-origin:100% 50%;transform:scaleX(0.9081)">הלו מי שם 1</div>
<div class="t" style="right:403.10px;top:479.50px;color:#6d6d6d;font-size:12px;direction:ltr;font-weight:normal;transform-origin:100% 50%;transform:scaleX(0.8734)">27/05/2020 15:33</div>
<div class="t" style="right:538.08px;top:479.50px;color:#6d6d6d;font-size:12px;direction:rtl;font-weight:normal;transform-origin:100% 50%;transform:scaleX(0.9706)">תיקיית קבצים</div>
<svg style="left:1115.6px;top:498.05px" width="13.2" height="15.5"><rect x="0.5" y="0.5" width="11.2" height="13.5" fill="#fde592" stroke="#ecc45c" stroke-width="1"/><rect x="8.899999999999999" y="8.5" width="2.8" height="5.5" fill="#fdeaa8" stroke="#e9bf52" stroke-width="0.8"/></svg>
<div class="t" style="right:176.30px;top:499.25px;color:#222;font-size:12px;direction:rtl;font-weight:normal;transform-origin:100% 50%;transform:scaleX(0.9646)">הכל בגלל כדור אחד</div>
<div class="t" style="right:403.10px;top:499.25px;color:#6d6d6d;font-size:12px;direction:ltr;font-weight:normal;transform-origin:100% 50%;transform:scaleX(0.8734)">27/05/2020 15:33</div>
<div class="t" style="right:538.08px;top:499.25px;color:#6d6d6d;font-size:12px;direction:rtl;font-weight:normal;transform-origin:100% 50%;transform:scaleX(0.9706)">תיקיית קבצים</div>
<svg style="left:0;top:520px" width="180" height="150">
 <defs>
  <clipPath id="topc"><rect x="-60" y="-60" width="120" height="42.7"/></clipPath>
  <clipPath id="botc"><rect x="-60" y="17" width="120" height="60"/></clipPath>
 </defs>
 <g transform="translate(89.2 79.8) rotate(-15)">
  <circle r="53.8" fill="none" stroke="#dcdcdc" stroke-width="4"/>
  <circle r="46" fill="none" stroke="#dcdcdc" stroke-width="1.6"/>
  <rect x="36" y="-13.5" width="40" height="26" fill="#fff"/>
  <rect x="-72" y="-12" width="30" height="26" fill="#fff"/>
  <circle r="42" fill="#dcdcdc" clip-path="url(#topc)"/>
  <circle r="42" fill="#dcdcdc" clip-path="url(#botc)"/>
  <text x="-0.8" y="-19.5" text-anchor="middle" font-family="Liberation Sans" font-weight="bold" font-size="18" fill="#fff" stroke="#fff" stroke-width="0.9" direction="rtl">מחשב</text>
  <text x="0.2" y="34.5" text-anchor="middle" font-family="Liberation Sans" font-weight="bold" font-size="18" fill="#fff" stroke="#fff" stroke-width="0.9" direction="rtl">מוגן</text>
  <path d="M-39 9.5 V-9.3 L-26.6 9.3 V-9.3 M-11 -9.1 H-20.8 V9.2 H-11 M-20.8 0.1 H-12 M-8 -9.1 H4.5 M-1.7 -9.1 V9.4" fill="none" stroke="#d8d8d8" stroke-width="1.9"/>
  <path d="M18.6 -9.1 H11 Q9 -9.1 9 -7.1 V9.4 M9 0 H18 M22.7 9.2 V-7.1 Q22.7 -9.1 24.7 -9.1 H28.6 Q32.8 -9.1 32.8 -4.8 Q32.8 -0.5 28.6 -0.5 H22.7 M28.3 -0.5 L33.9 9 M49.2 -9.2 H41.2 Q39.2 -9.2 39.2 -7.2 V7 Q39.2 9 41.2 9 H49.1 M39.2 -0.1 H47.8 M63.9 -9.3 H55.8 Q53.8 -9.3 53.8 -7.3 V7 Q53.8 9 55.8 9 H63.7 M53.8 -0.1 H62.8" fill="none" stroke="#dedede" stroke-width="1.1"/>
  <path d="M-65 -7.7 Q-60 -10 -55 -8 Q-49 -10 -44.5 -7.3 Q-44 5 -55.3 11.6 Q-66 5 -65 -7.7 Z" fill="#d9d9d9"/>
  <path d="M-66 -4.5 Q-58 -4 -55 3 Q-52 -4 -44 -4.5" fill="none" stroke="#fff" stroke-width="1.1"/>
  <path d="M-64 -1 Q-57.5 0.5 -56 7" fill="none" stroke="#fff" stroke-width="0.9"/>
 </g>
</svg>
<div class="a" style="left:1214px;top:669.5px;width:1px;height:10px;background:#f0f0f0;"></div>
<div class="t" style="right:13.75px;top:667.70px;color:#1e395b;font-size:12px;direction:rtl;font-weight:normal;transform-origin:100% 50%;transform:scaleX(0.9075)">16 פריטים</div>
<svg style="left:7px;top:668px" width="14" height="11">
 <rect x="0.5" y="0.5" width="13" height="10" fill="#f4f4f4" stroke="#bbb"/>
 <rect x="2" y="2.5" width="10" height="6" fill="#b9d5ef"/>
 <path d="M2 6.5 C5 5 8 7 12 6 V8.5 H2 Z" fill="#22456f"/>
</svg>
<div class="a" style="left:24.5px;top:663.6px;width:20.2px;height:22px;background:#cce8ff;border:1px solid #2f95ec;border-left-color:#8cc6f5"></div>
<svg style="left:24.5px;top:663.6px" width="21" height="22">
 <path d="M1.8 6.9 H5.5 M7.5 6.9 H11.3 M1.8 10.8 H5.5 M7.5 10.8 H11.3 M1.8 14.8 H5.5 M7.5 14.8 H11.3" stroke="#444" stroke-width="1.1"/>
 <rect x="12.8" y="4.7" width="3.6" height="3.9" fill="#fff" stroke="#aaa" stroke-width="0.7"/>
 <rect x="12.8" y="8.7" width="3.6" height="3.9" fill="#fff" stroke="#aaa" stroke-width="0.7"/>
 <rect x="12.8" y="12.7" width="3.6" height="3.9" fill="#fff" stroke="#aaa" stroke-width="0.7"/>
</svg>
<div class="a" style="left:0px;top:685px;width:1286px;height:38px;background:#1c1c1c;"></div>
<div class="a" style="left:3.5px;top:685px;width:1px;height:38px;background:#4a4a4a;"></div>
<div class="a" style="left:917px;top:685px;width:324px;height:38px;background:#f0f0f0;border-top:1px solid #d4d4d4"></div>
<div class="t" style="right:82.70px;top:696.54px;color:#444;font-size:14.5px;direction:rtl;font-weight:normal;transform-origin:100% 50%;transform:scaleX(0.9810)">הקלד כאן כדי לחפש</div>
<svg style="left:1214px;top:697px" width="17" height="16">
 <circle cx="10.5" cy="5.8" r="4.8" fill="none" stroke="#333" stroke-width="1.3"/>
 <path d="M7 9.3 L1 15" stroke="#333" stroke-width="1.5"/>
</svg>
<svg style="left:1255px;top:695.5px" width="17" height="17">
 <path d="M0 2.3 L6.8 1.3 V7.8 H0 Z M7.8 1.1 L16 0 V7.8 H7.8 Z M0 8.8 H6.8 V15.3 L0 14.3 Z M7.8 8.8 H16 V16.7 L7.8 15.5 Z" fill="#fff"/>
</svg>
<svg style="left:885px;top:695px" width="19" height="17">
 <rect x="0.5" y="3" width="2.5" height="13" fill="#fff"/>
 <rect x="0" y="5" width="3.5" height="3" fill="#fff"/>
 <path d="M5 1 H17.5 M6 1 V3 M16.5 1 V3" stroke="#fff" stroke-width="1.3"/>
 <rect x="5.5" y="5" width="11.5" height="6.5" fill="none" stroke="#fff" stroke-width="1.4"/>
 <path d="M5 15.5 H17.5 M6 13.5 V15.5 M16.5 13.5 V15.5" stroke="#fff" stroke-width="1.3"/>
</svg>
<svg style="left:837px;top:694px" width="20" height="21">
 <path d="M19.3 11.8 H5.2 C5.5 15.8 8.6 17.8 12.2 17.8 C14.9 17.8 17.3 16.9 18.8 15.9 V19.2 C17 20.3 14.6 20.9 11.9 20.9 C5.3 20.9 1 16.5 1.2 10.5 C1.4 4.5 6 0.2 11.4 0.2 C16.5 0.2 19.7 3.5 19.5 9.7 Z M14.8 8.7 C14.8 6 13.2 4.3 10.6 4.3 C7.9 4.3 5.9 6 5.4 8.7 Z" fill="#1483e0"/>
</svg>
<div class="a" style="left:777.4px;top:685px;width:45.6px;height:38px;background:#3c3c3c;"></div>
<div class="a" style="left:777.4px;top:721px;width:45.6px;height:2px;background:#76b9ed;"></div>
<svg style="left:790px;top:694.5px" width="21" height="19">
 <path d="M0 1.5 H7.5 L9 0 H20 V18 H0 Z" fill="#f5b83a"/>
 <rect x="0" y="3.5" width="20" height="14.5" fill="#fcd66c"/>
 <path d="M5 18 V10 H15 V18 H12.2 V12.7 H7.8 V18 Z" fill="#1e88e5"/>
</svg>
<svg style="left:743.5px;top:693.2px" width="22" height="22">
 <circle cx="10.8" cy="10.8" r="10.7" fill="#db4437"/>
 <path d="M10.8 10.8 L1.5 16.1 A10.7 10.7 0 0 1 1.5 5.4 Z" fill="#0f9d58"/>
 <path d="M10.8 10.8 L20.1 5.4 A10.7 10.7 0 0 1 10.8 21.5 L1.5 16.1 Z" fill="#0f9d58"/>
 <path d="M10.8 10.8 L20.1 5.4 A10.7 10.7 0 0 1 10.8 21.5 Z" fill="#ffcd40"/>
 <circle cx="10.8" cy="10.8" r="5" fill="#fff"/>
 <circle cx="10.8" cy="10.8" r="3.9" fill="#4285f4"/>
</svg>
<svg style="left:695.5px;top:692.3px" width="24" height="23">
 <path d="M8 6.5 C8 2 9.5 0.7 11.7 0.7 C13.9 0.7 15.4 2 15.4 6.5" stroke="#fff" stroke-width="1.5" fill="none"/>
 <path d="M0.5 5.5 H23 V20.5 C23 21.8 22 22.7 20.8 22.7 H2.7 C1.5 22.7 0.5 21.8 0.5 20.5 Z" fill="#fff"/>
 <rect x="7" y="9" width="4.3" height="4.3" fill="#f25022"/>
 <rect x="12.2" y="9" width="4.3" height="4.3" fill="#7fba00"/>
 <rect x="7" y="14.2" width="4.3" height="4.3" fill="#00a4ef"/>
 <rect x="12.2" y="14.2" width="4.3" height="4.3" fill="#ffb900"/>
</svg>
<svg style="left:649.5px;top:694px" width="25" height="20">
 <path d="M0 6 L12 0 L24 6 V19.5 H0 Z" fill="#fff"/>
 <path d="M4 8.8 L19.5 6.2 L16.5 14.5 L13.2 10 Z" fill="#1c1c1c"/>
</svg>
<svg style="left:603.5px;top:693.5px" width="24" height="21">
 <rect x="7" y="0" width="16.5" height="20.5" fill="#2b7cd3"/>
 <rect x="7" y="5" width="16.5" height="5" fill="#41a5ee"/>
 <rect x="7" y="10" width="16.5" height="5" fill="#2b7cd3"/>
 <rect x="7" y="15" width="16.5" height="5.5" fill="#185abd"/>
 <rect x="0" y="4.5" width="12.5" height="12" fill="#185abd"/>
 <text x="6.3" y="14.3" text-anchor="middle" font-family="Liberation Sans" font-weight="bold" font-size="10" fill="#fff">W</text>
</svg>
<div class="a" style="left:550.6px;top:721px;width:38px;height:2px;background:#76b9ed;"></div>
<svg style="left:557.5px;top:694.5px" width="25" height="21">
 <g fill="#fff" stroke="#1c1c1c" stroke-width="0.9">
  <rect x="1" y="3" width="8" height="12" rx="1" transform="rotate(-28 5 9)"/>
  <rect x="4" y="1.5" width="8" height="13" rx="1" transform="rotate(-14 8 8)"/>
  <rect x="7.5" y="0.8" width="8.5" height="14" rx="1"/>
  <rect x="10.5" y="3.5" width="10" height="14.5" rx="1" transform="rotate(16 15.5 10.5)"/>
 </g>
 <path d="M15.8 6.5 C17.5 9 19.8 10 17.8 12.3 C17 13 16 12.5 15.9 12 L16.8 14 H14.8 L15.7 12 C15.6 12.5 14.5 13 13.8 12.3 C11.8 10 14.2 9 15.8 6.5 Z" fill="#1c1c1c"/>
</svg>
<div class="t" style="right:1189.77px;top:688.52px;color:#fff;font-size:13px;direction:ltr;font-weight:normal;transform-origin:100% 50%;transform:scaleX(0.8121)">03:12</div>
<div class="t" style="right:1175.43px;top:704.62px;color:#fff;font-size:13px;direction:ltr;font-weight:normal;transform-origin:100% 50%;transform:scaleX(0.8415)">13/10/2020</div>
<div class="t" style="right:1142.62px;top:696.62px;color:#fff;font-size:13px;direction:rtl;font-weight:normal;transform-origin:100% 50%;transform:scaleX(0.9364)">עבר</div>
<svg style="left:153.5px;top:700px" width="17" height="10">
 <rect x="0.7" y="0.7" width="13.3" height="8.3" fill="none" stroke="#fff" stroke-width="1.4"/>
 <rect x="14.3" y="3" width="1.7" height="3.8" fill="#fff"/>
 <rect x="2.5" y="2.5" width="4.5" height="4.8" fill="#fff"/>
</svg>
<svg style="left:176px;top:698.5px" width="17" height="14">
 <path d="M3 11 A3 3 0 0 1 3 5 A4.8 4.8 0 0 1 12 4 A3 3 0 0 1 14 9 Z" fill="#d0d0d0"/>
 <circle cx="12" cy="9.5" r="4.3" fill="#8a8a8a"/>
 <path d="M11 7.3 V11.8 M13 7.3 V11.8" stroke="#fff" stroke-width="1"/>
</svg>
<svg style="left:199.5px;top:700px" width="14" height="9">
 <path d="M1 7.3 L6.5 1.5 L12 7.3" stroke="#fff" stroke-width="1.4" fill="none"/>
</svg>
<svg style="left:15px;top:694px" width="27" height="27">
 <path d="M6.5 1.5 H24.5 V14.5 H17 L13.5 18 V14.5 H6.5 Z" fill="#fff"/>
 <path d="M10 5.5 H21 M10 8 H21 M10 10.5 H17" stroke="#1c1c1c" stroke-width="1"/>
 <circle cx="8.6" cy="17.3" r="7.4" fill="#1c1c1c" stroke="#9a9a9a" stroke-width="1.4"/>
 <text x="8.6" y="21.6" text-anchor="middle" font-family="Liberation Sans" font-weight="bold" font-size="11.5" fill="#fff">5</text>
</svg>
</body></html>
